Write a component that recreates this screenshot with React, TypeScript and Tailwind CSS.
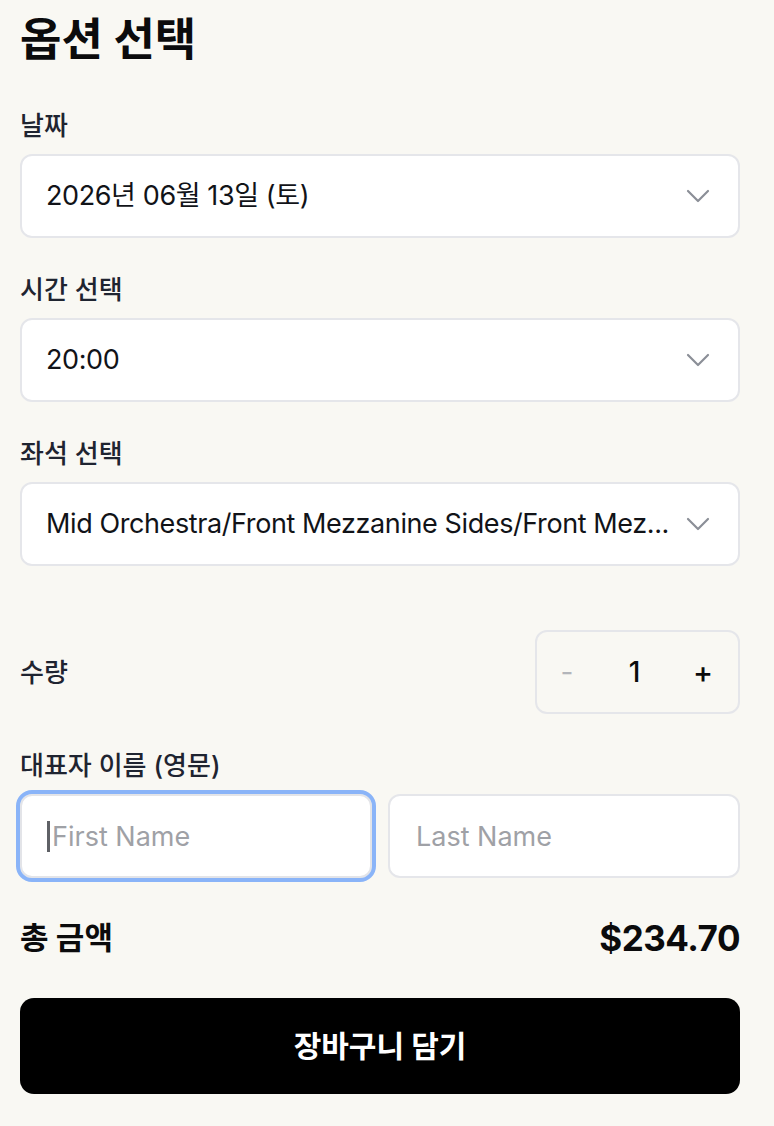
import { useState } from "react";

const FONT = { fontFamily: 'Inter, "Noto Sans CJK KR", sans-serif' };

function Chevron() {
  return (
    <svg width="24" height="14" viewBox="0 0 24 14" fill="none" className="shrink-0">
      <path d="M2 2l10 10L22 2" stroke="#8b8f97" strokeWidth="2.2" strokeLinecap="round" strokeLinejoin="round" />
    </svg>
  );
}

function SelectBox({ label, value }: { label: string; value: string }) {
  return (
    <div>
      <div className="text-[26px] leading-[40px] font-medium text-[#1f2430]">{label}</div>
      <button
        type="button"
        className="mt-[8px] flex h-[84px] w-full items-center gap-[10px] rounded-[12px] border-2 border-[#e5e6ea] bg-white pl-[24px] pr-[28px] text-left"
      >
        <span className="min-w-0 flex-1 whitespace-nowrap text-[27px] tracking-[-0.4px] text-[#111318]">{value}</span>
        <Chevron />
      </button>
    </div>
  );
}

export default function App() {
  const [qty, setQty] = useState(1);

  return (
    <div className="min-h-screen bg-[#f9f8f3]" style={FONT}>
      <div className="pl-[20px] pr-[34px] pt-[12px] pb-[32px]">
        <h1 className="text-[45px] leading-[56px] font-bold text-[#0b0b0c]">옵션 선택</h1>

        <div className="mt-[38px] flex flex-col gap-[32px]">
          <SelectBox label="날짜" value="2026년 06월 13일 (토)" />
          <SelectBox label="시간 선택" value="20:00" />
          <SelectBox label="좌석 선택" value="Mid Orchestra/Front Mezzanine Sides/Front Mez..." />
        </div>

        {/* quantity */}
        <div className="mt-[64px] flex items-center justify-between">
          <span className="text-[26px] font-medium text-[#1f2430]">수량</span>
          <div className="flex h-[84px] w-[205px] items-center rounded-[12px] border-2 border-[#e5e6ea]">
            <button
              type="button"
              onClick={() => setQty((q) => Math.max(1, q - 1))}
              className="h-full w-[60px] text-[28px] text-[#b3b5ba]"
            >
              -
            </button>
            <span className="flex-1 text-center text-[28px] font-medium text-[#0b0b0c]">{qty}</span>
            <button
              type="button"
              onClick={() => setQty((q) => q + 1)}
              className="h-full w-[66px] pr-[4px] text-[30px] font-medium text-[#0b0b0c]"
            >
              +
            </button>
          </div>
        </div>

        {/* representative name */}
        <div className="mt-[32px]">
          <div className="text-[26px] leading-[40px] font-medium text-[#1f2430]">대표자 이름 (영문)</div>
          <div className="mt-[8px] grid grid-cols-2 gap-[16px]">
            <div className="relative">
              <input
                placeholder="First Name"
                className="h-[84px] w-full rounded-[12px] border-2 border-[#e3e4e8] bg-white pl-[30px] text-[27px] text-[#111318] outline-[4px] outline-[#8ab4f8] outline-solid placeholder:text-[#9fa1a6]"
              />
              <span className="pointer-events-none absolute left-[27px] top-[27px] h-[31px] w-[3px] bg-[#5f6166]" />
            </div>
            <input
              placeholder="Last Name"
              className="h-[84px] w-full rounded-[12px] border-2 border-[#e5e6ea] bg-white pl-[26px] text-[27px] text-[#111318] outline-none placeholder:text-[#9fa1a6]"
            />
          </div>
        </div>

        {/* total */}
        <div className="mt-[36px] flex h-[48px] items-center justify-between">
          <span className="text-[31px] font-bold text-[#0b0b0c]">총 금액</span>
          <span className="text-[35px] font-bold tracking-[-0.5px] text-[#0b0b0c]">$234.70</span>
        </div>

        <button
          type="button"
          className="mt-[36px] flex h-[96px] w-full items-center justify-center rounded-[14px] bg-black text-[30px] font-bold text-white"
        >
          장바구니 담기
        </button>
      </div>
    </div>
  );
}
